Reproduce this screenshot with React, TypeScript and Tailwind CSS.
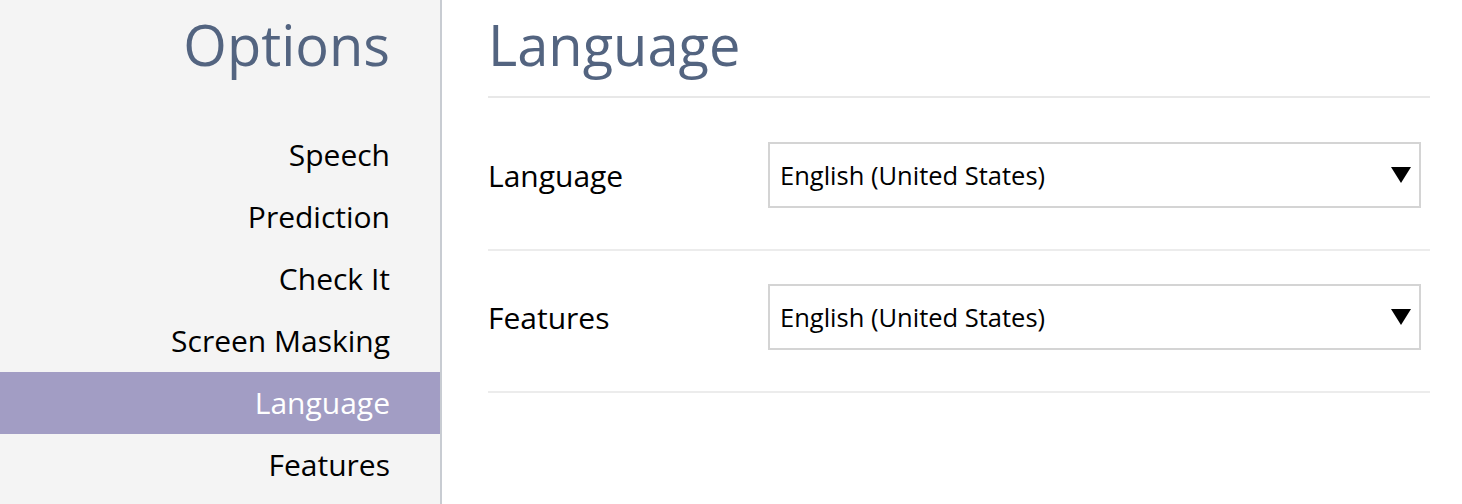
const navItems = ["Speech", "Prediction", "Check It", "Screen Masking", "Language", "Features"];

const settings = [
  { label: "Language", value: "English (United States)" },
  { label: "Features", value: "English (United States)" },
];

function Sidebar() {
  const active = "Language";
  return (
    <aside className="flex w-[442px] shrink-0 flex-col border-r-2 border-[#c8ccd2] bg-[#f4f4f4]">
      <h1 className="pr-[50px] pt-[4px] text-right text-[56px] leading-[80px] text-[#536480]">
        Options
      </h1>
      <nav aria-label="options-navigation" className="mt-[40px]">
        <ul className="flex flex-col">
          {navItems.map((item) => {
            const isActive = item === active;
            return (
              <li
                key={item}
                className={`${
                  isActive ? "bg-[#a29dc4] text-white" : "text-black"
                } h-[62px] pr-[50px] text-right text-[30px] leading-[62px]`}
              >
                {item}
              </li>
            );
          })}
        </ul>
      </nav>
    </aside>
  );
}

function SelectBox({ value }: { value: string }) {
  return (
    <div className="flex h-[66px] flex-1 items-center justify-between border-2 border-[#d4d4d4] bg-white pl-[10px] pr-[8px]">
      <span className="text-[25.5px] text-black">{value}</span>
      <svg width="20" height="16" viewBox="0 0 20 16" aria-hidden="true">
        <polygon points="0,0 20,0 10,16" fill="#000" />
      </svg>
    </div>
  );
}

export default function App() {
  return (
    <div
      className="flex h-[504px] w-full overflow-hidden bg-white"
      style={{ fontFamily: '"Open Sans", sans-serif' }}
    >
      <Sidebar />
      <main className="flex-1 pl-[46px] pr-[32px]">
        <h2 className="pt-[4px] text-[56px] leading-[80px] text-[#536480]">Language</h2>
        <div className="mt-[12px] border-t-2 border-[#e8e8e8]">
          {settings.map((row) => (
            <div
              key={row.label}
              className="flex items-center border-b-2 border-[#ececec] pb-[41px] pt-[33px] first:pt-[44px]"
            >
              <label className="w-[280px] text-[30px] text-black">{row.label}</label>
              <div className="mr-[9px] flex flex-1">
                <SelectBox value={row.value} />
              </div>
            </div>
          ))}
        </div>
      </main>
    </div>
  );
}
